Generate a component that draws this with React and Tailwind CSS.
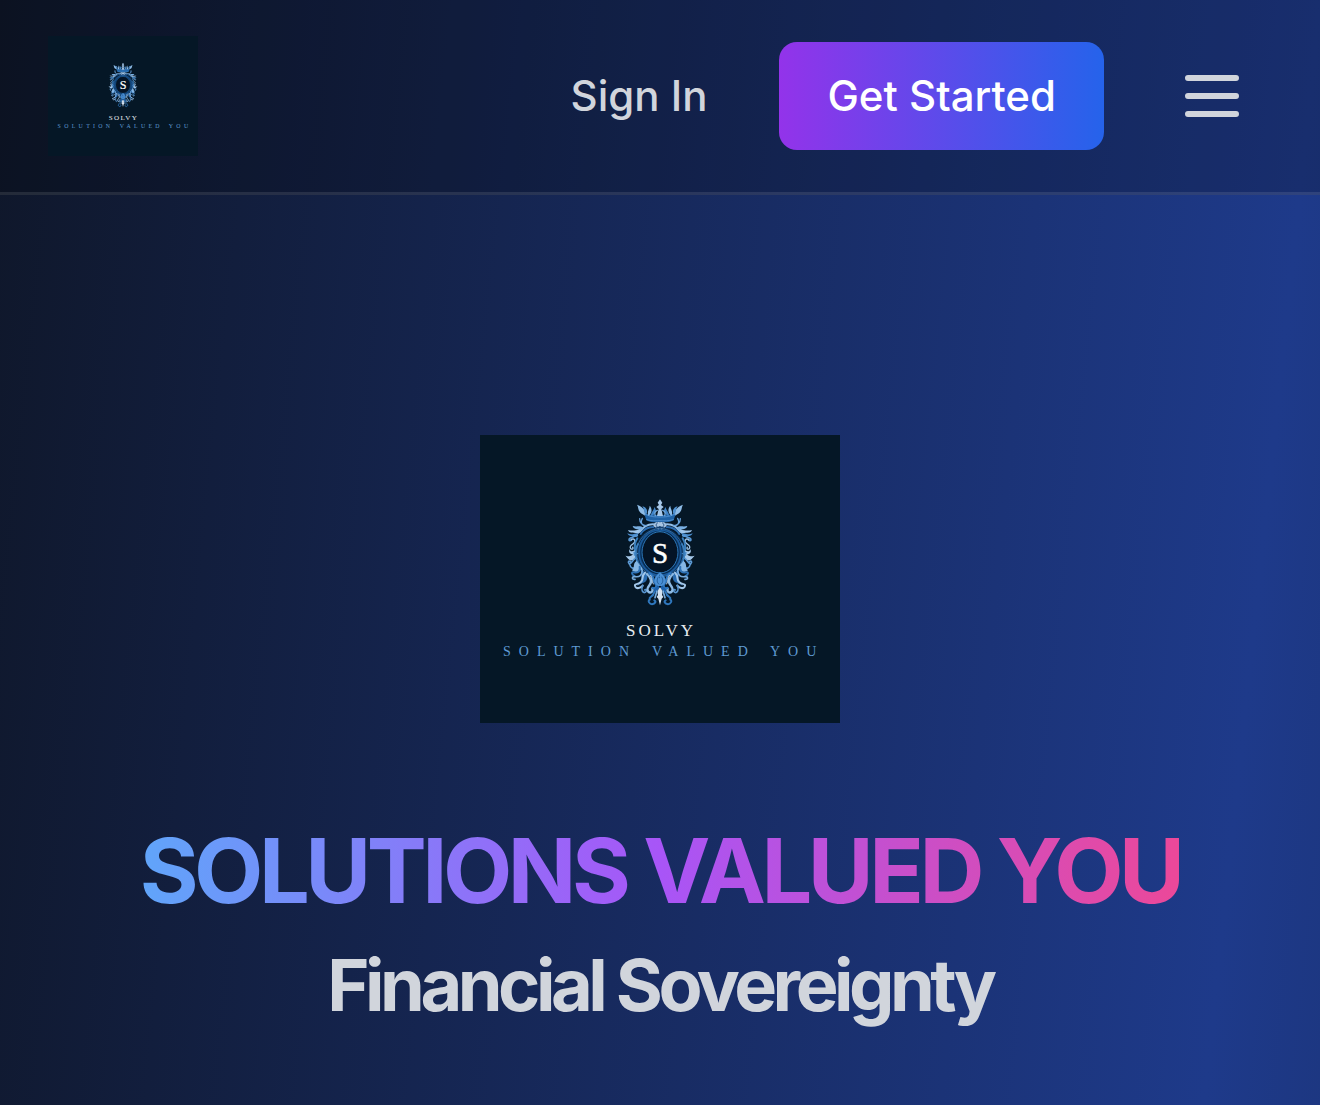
function CrestHalf() {
  return (
    <g fill="none" strokeLinecap="round">
      {/* crown */}
      <path d="M180 74C162 76 148 75 132 69L139 91C153 99 168 97 180 97Z" fill="#1f62a6" />
      <path d="M136 73C152 81 166 81 180 81M140 89C155 94 168 92 180 92" stroke="#4a8ccc" strokeWidth="3" />
      <path d="M134 77C138 60 128 50 111 44C116 53 114 58 118 64C122 72 128 71 134 77Z" fill="#8dbbe6" />
      <path d="M137 76C146 64 140 52 127 49C133 58 132 65 137 76Z" fill="#4f90cf" />
      <path d="M146 78C156 68 158 58 149 47C149 57 139 66 146 78Z" fill="#8dbce8" />
      <path d="M153 79C168 73 172 62 163 51C163 61 151 67 153 79Z" fill="#4084c8" />
      <path d="M180 28L173 38L177 45L169 51L176 57L171 78H180Z" fill="#a6c8ea" />
      <path d="M172 61C164 64 163 70 166 77" stroke="#6ea6da" strokeWidth="4" />
      {/* fleuron below the crown */}
      <path d="M180 97C170 94 160 98 160 106C162 113 170 115 176 120L180 108Z" fill="#a9c6e3" />
      <path d="M172 99C166 103 168 110 173 112" stroke="#234f7e" strokeWidth="3" />
      <path d="M160 103C143 102 129 112 119 126" stroke="#91bde7" strokeWidth="6" />
      <path d="M160 111C142 111 130 119 122 132" stroke="#2c6cb0" strokeWidth="6" />
      {/* upper scrolls */}
      <path d="M139 107C128 107 119 99 119 86M132 107C123 103 122 94 127 85" stroke="#68a2dc" strokeWidth="4" />
      <path d="M130 114C121 105 111 112 98 108C101 119 113 116 121 122Z" fill="#79afe2" />
      <path d="M121 120C112 116 105 125 84 120C90 134 104 124 115 132Z" fill="#a0c6eb" />
      <path d="M116 130C106 127 98 137 82 130C87 141 98 138 109 142Z" fill="#4a8ccc" />
      <path d="M112 137C99 138 94 145 91 144C84 148 87 154 94 151" stroke="#5797d4" strokeWidth="5" />
      {/* side scrolls and points */}
      <path d="M93 149C104 142 109 155 100 161C91 166 88 171 93 177C98 179 101 175 98 172" stroke="#9dc2e6" strokeWidth="4" />
      <path d="M112 145C103 159 103 173 106 188" stroke="#397fbd" strokeWidth="6" />
      <path d="M104 181C95 187 89 183 90 177C84 184 89 193 99 193C91 201 87 199 76 197C85 205 88 215 99 210L109 204Z" fill="#a4c8ea" />
      <path d="M100 185L117 190L102 198Z" fill="#4b8dca" />
      <path d="M108 203C94 213 98 219 88 222C82 215 87 211 91 215M90 225C91 234 101 238 106 231" stroke="#5c9ad5" strokeWidth="5" />
      {/* oval frame */}
      <path d="M180 111A78 78 0 0 0 180 263" stroke="#123f70" strokeWidth="4" />
      <path d="M180 116A70 72 0 0 0 180 260" stroke="#34699c" strokeWidth="3" />
      <path d="M180 120A63 68 0 0 0 180 256" stroke="#1a5a9c" strokeWidth="5" />
      <path d="M180 125A54 62 0 0 0 180 249" stroke="#2d76b8" strokeWidth="3" />
      <path d="M114 162C101 184 106 214 125 238" stroke="#3b80c0" strokeWidth="5" />
      {/* lower leaves */}
      <path d="M110 212C96 222 106 234 96 240C103 250 118 246 120 238L128 246C130 230 116 224 110 212Z" fill="#86b7e4" />
      <path d="M119 230C122 246 112 249 102 247C94 244 94 254 103 258" stroke="#2f73b7" strokeWidth="6" />
      <path d="M122 240C140 246 146 258 140 270C134 282 126 276 112 288C114 276 126 272 124 260Z" fill="#2a6cb0" />
      <path d="M127 241C126 256 119 262 105 260C94 259 96 270 105 268" stroke="#77abdc" strokeWidth="5" />
      <path d="M135 248C122 259 133 268 122 277C111 286 101 279 106 290C111 298 120 294 128 287" stroke="#a3c7e9" strokeWidth="6" />
      <path d="M128 286C122 300 128 310 136 307C142 303 138 296 134 300" stroke="#5794cf" strokeWidth="5" />
      <path d="M141 252C152 262 158 276 148 286C143 292 140 296 144 304C152 312 160 304 157 296" stroke="#8dbae4" strokeWidth="7" />
      <path d="M148 250C164 258 156 269 166 280C174 290 166 299 158 294" stroke="#2f77bf" strokeWidth="7" />
      <path d="M152 256C158 266 154 272 160 282" stroke="#b9d4ee" strokeWidth="3" />
      <path d="M180 246L171 255C160 266 160 281 174 288H180Z" fill="#4a90d5" />
      <path d="M175 261C169 269 171 279 177 283" stroke="#174a82" strokeWidth="2" />
      <path d="M176 288C166 290 160 298 162 308C169 306 174 299 180 296Z" fill="#1e62ac" />
      <path d="M180 292C173 300 171 307 174 315L170 321L175 326L180 346Z" fill="#d4e2f0" />
      <path d="M163 306C158 326 146 317 149 329C142 332 149 343 156 343C166 342 169 334 163 331" stroke="#2f77bd" strokeWidth="6" />
      <path d="M171 303L165 323" stroke="#78addf" strokeWidth="5" />
    </g>
  );
}

function Logo({ className }) {
  return (
    <svg viewBox="0 0 360 288" preserveAspectRatio="none" role="img" aria-label="SOLVY" className={className}>
      <rect width="360" height="288" fill="#051726" />
      <g transform="translate(120 55) scale(0.3333)">
        <ellipse cx="180" cy="187" rx="74" ry="76" fill="#062a50" />
        <ellipse cx="180" cy="187" rx="53" ry="61" fill="#041426" />
        <CrestHalf />
        <g transform="translate(360 0) scale(-1 1)">
          <CrestHalf />
        </g>
      </g>
      <g fontFamily='"Liberation Serif", serif'>
        <text x="180" y="128" textAnchor="middle" fontSize="29" fill="#ffffff" stroke="#ffffff" strokeWidth="0.5">S</text>
        <text x="146" y="201" fontSize="17" letterSpacing="3" fill="#e8ecf0">SOLVY</text>
        <g fontSize="14" letterSpacing="8" fill="#5f9bd3">
          <text x="23" y="221">SOLUTION</text>
          <text x="172" y="221">VALUED</text>
          <text x="290" y="221">YOU</text>
        </g>
      </g>
    </svg>
  );
}

export default function App() {
  return (
    <div className="min-h-screen bg-[linear-gradient(96deg,#0f172a_0px,#1e3a8a_1313px,#0f172a_2626px)] font-[Inter,sans-serif] text-white">
      <header className="border-b-3 border-white/10 bg-black/20">
        <nav className="flex h-48 items-center justify-between px-12">
          <a href="#" aria-label="SOLVY home">
            <Logo className="block h-30 w-[150px]" />
          </a>
          <div className="flex items-center">
            <a href="#signin" className="px-12 text-[42px] leading-[60px] font-medium text-gray-300">Sign In</a>
            <button type="button" className="ml-6 rounded-[18px] bg-[linear-gradient(to_right,#9333ea,#2563eb)] px-12 py-6 text-[42px] leading-[60px] font-medium">
              Get Started
            </button>
            <button type="button" aria-label="Open menu" className="ml-12 p-6 text-gray-300">
              <svg className="size-18" viewBox="0 0 24 24" fill="none" stroke="currentColor" strokeWidth="2" strokeLinecap="round">
                <path d="M4 6h16M4 12h16M4 18h16" />
              </svg>
            </button>
          </div>
        </nav>
      </header>
      <main className="flex flex-col items-center px-12 pt-60 text-center">
        <Logo className="block h-72 w-90" />
        <h1 className="mt-24 text-[90px] leading-[104px] font-bold tracking-tighter">
          <span className="block bg-[linear-gradient(to_right,#60a5fa,#a855f7,#ec4899)] bg-clip-text text-transparent">
            SOLUTIONS VALUED YOU
          </span>
          <span className="block text-[72px] leading-[124px] text-gray-300">Financial Sovereignty</span>
        </h1>
      </main>
    </div>
  );
}
